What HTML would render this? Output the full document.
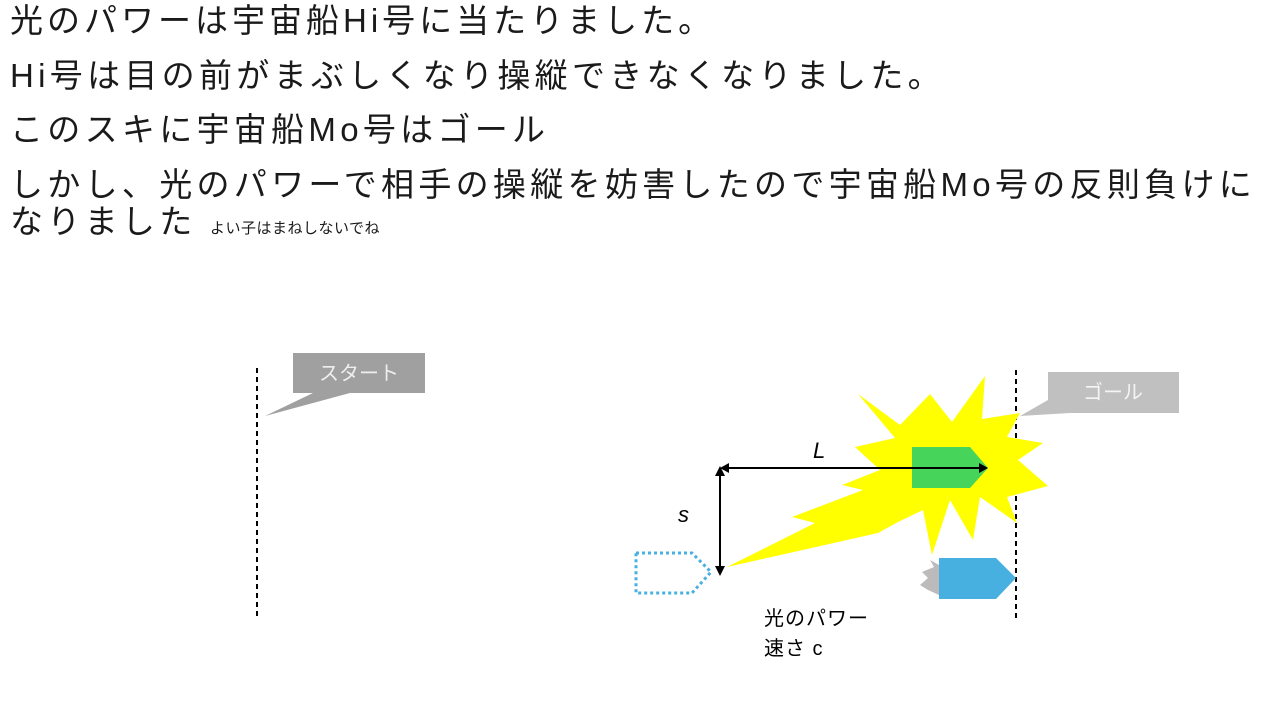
<!DOCTYPE html>
<html><head><meta charset="utf-8"><style>
body{margin:0;width:1280px;height:720px;background:#fff;position:relative;overflow:hidden;font-family:"Liberation Sans","Noto Sans CJK JP",sans-serif;color:#1a1a1a}
.t{position:absolute;left:10px;font-size:33px;line-height:40px;white-space:nowrap;letter-spacing:4.3px}
</style></head><body>
<div class="t" style="top:1px;letter-spacing:4px">光のパワーは宇宙船Hi号に当たりました。</div>
<div class="t" style="top:56px">Hi号は目の前がまぶしくなり操縦できなくなりました。</div>
<div class="t" style="top:110px">このスキに宇宙船Mo号はゴール</div>
<div class="t" style="top:165px">しかし、光のパワーで相手の操縦を妨害したので宇宙船Mo号の反則負けに</div>
<div class="t" style="top:202px">なりました <span style="font-size:15px;letter-spacing:0.5px">よい子はまねしないでね</span></div>
<svg width="1280" height="720" style="position:absolute;left:0;top:0">
<line x1="257" y1="368" x2="257" y2="618" stroke="#000" stroke-width="2" stroke-dasharray="5,4"/>
<line x1="1016" y1="370" x2="1016" y2="620" stroke="#000" stroke-width="2" stroke-dasharray="5,4"/>
<polygon points="293,353 425,353 425,393 350,393 265,416 313,393 293,393" fill="#a0a0a0"/>
<text x="359" y="380" font-size="20" fill="#eee" text-anchor="middle" font-family="Liberation Sans,Noto Sans CJK JP,sans-serif">スタート</text>
<polygon points="1048,372 1179,372 1179,413 1070,413 1020,416 1048,400" fill="#c0c0c0"/>
<text x="1113" y="399" font-size="20" fill="#f4f4f4" text-anchor="middle" font-family="Liberation Sans,Noto Sans CJK JP,sans-serif">ゴール</text>
<polygon points="858,394 900,425 930,394 952,422 985,376 982,419 1020,413 1007,437 1043,443 1018,460 1048,486 1007,497 1017,523 980,497 973,540 950,500 932,555 923,510 898,522 878,533 727,567 815,523 792,517 863,490 842,485 880,470 855,447 895,438" fill="#ffff00"/>
<polygon points="912,447 970,447 988,468 970,488 912,488" fill="#47d45a"/>
<polygon points="922,572 934,567 930,560 939,565 939,595 928,590 920,585 928,578" fill="#bbb"/>
<polygon points="939,558 996,558 1016,578 996,599 939,599" fill="#47b0e0"/>
<polygon points="636,553 692,553 711,572 692,593 636,593" fill="none" stroke="#47b0e0" stroke-width="3" stroke-dasharray="3,3"/>
<line x1="724" y1="468" x2="984" y2="468" stroke="#000" stroke-width="2"/>
<polygon points="720,468 729,463 729,473"/><polygon points="988,468 979,463 979,473"/>
<line x1="720" y1="472" x2="720" y2="572" stroke="#000" stroke-width="2"/>
<polygon points="720,466 715,476 725,476"/><polygon points="720,576 715,566 725,566"/>
<text x="813" y="458" font-size="22" font-style="italic" font-family="Liberation Sans,sans-serif">L</text>
<text x="678" y="522" font-size="22" font-style="italic" font-family="Liberation Sans,sans-serif">s</text>
<text x="764" y="625" font-size="20" letter-spacing="1" font-family="Liberation Sans,Noto Sans CJK JP,sans-serif">光のパワー</text>
<text x="764" y="655" font-size="20" letter-spacing="1" font-family="Liberation Sans,Noto Sans CJK JP,sans-serif">速さ c</text>
</svg>
</body></html>
